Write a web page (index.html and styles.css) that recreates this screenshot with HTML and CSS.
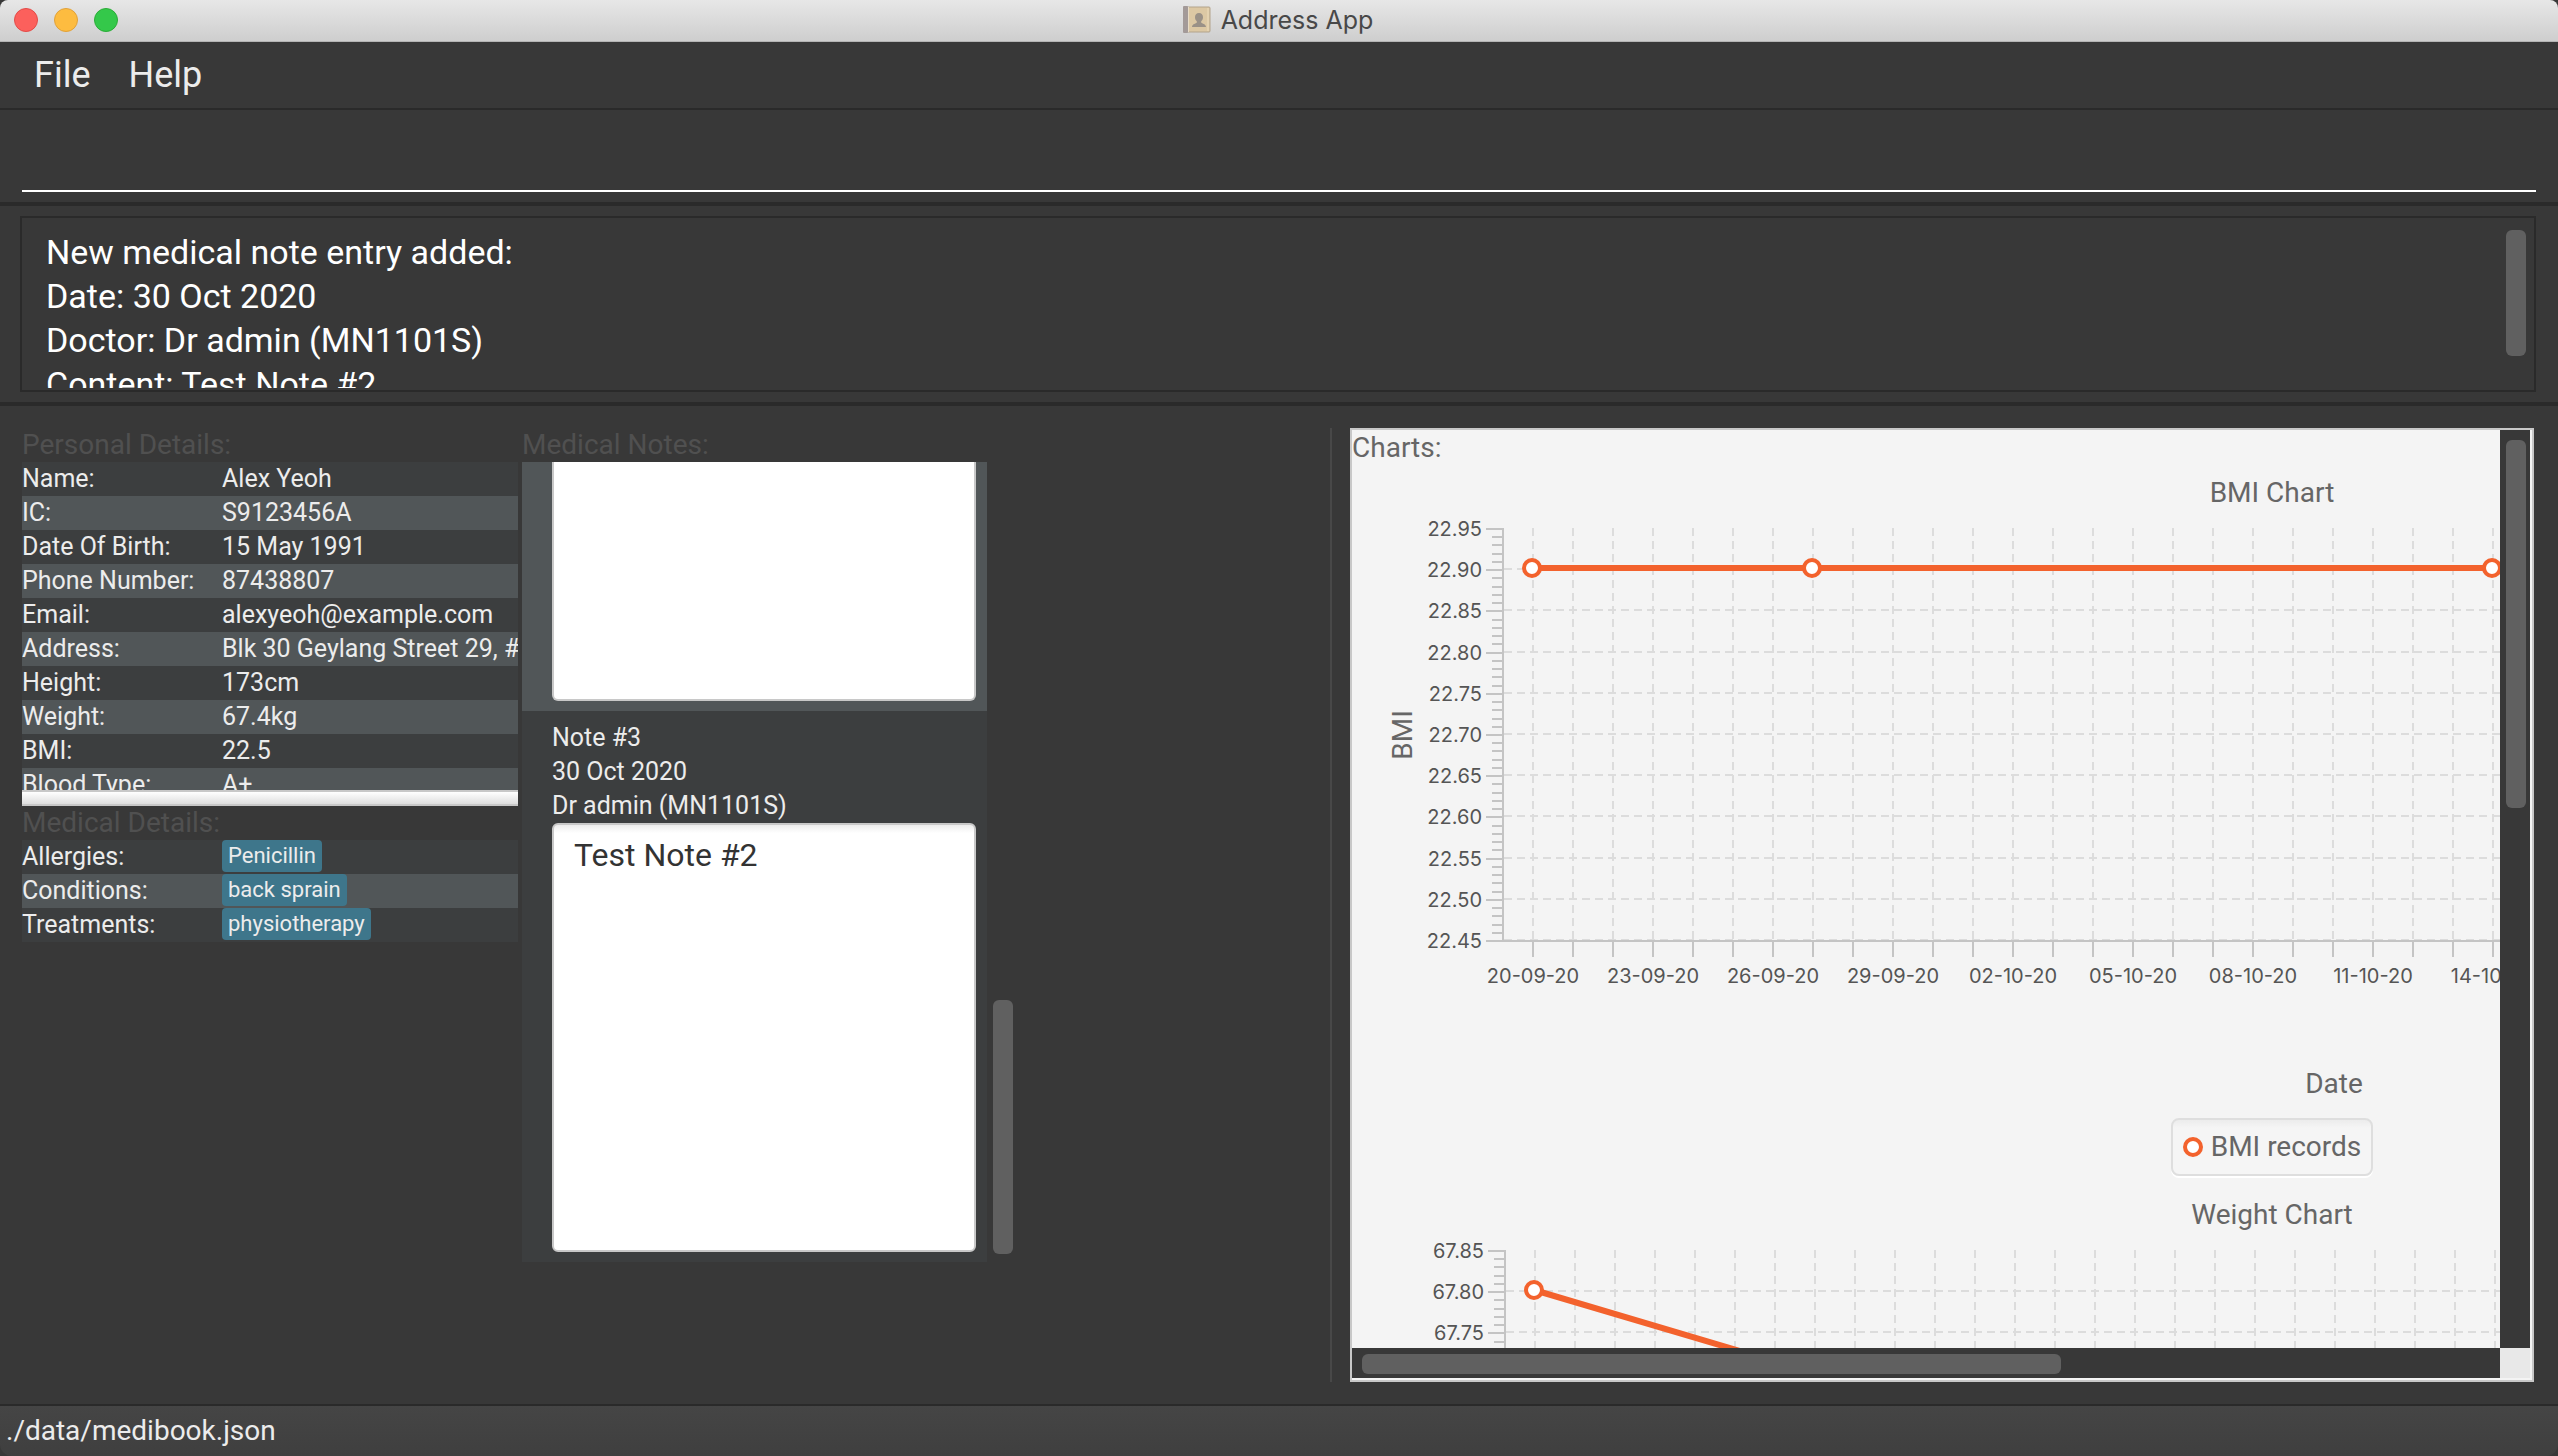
FILE: index.html
```html
<!DOCTYPE html>
<html lang="en">
<head>
<meta charset="utf-8">
<meta name="viewport" content="width=device-width, initial-scale=1">
<title>Address App</title>
<link rel="stylesheet" href="styles.css">
</head>
<body>
<div class="window">
  <header class="titlebar">
    <div class="lights">
      <button class="light light-close" type="button" aria-label="Close"></button>
      <button class="light light-min" type="button" aria-label="Minimise"></button>
      <button class="light light-zoom" type="button" aria-label="Zoom"></button>
    </div>
    <h1 class="title">
      <svg class="title-icon" viewBox="0 0 28 28" aria-hidden="true">
        <rect x="1" y="1" width="26" height="25" rx="1" fill="#dcc8a4" stroke="#b3a48c"/>
        <rect x="0" y="0" width="5" height="27" rx="1" fill="#a39a98"/>
        <path d="M5.500 1v25" stroke="#e8dcc6"/>
        <path d="M25 2v23" stroke="#ecdcbc"/>
        <path d="M16 7c2.600 0 4 1.800 4 4.200 0 1.800-.8 3.200-1.800 4v1.300c.8 1.200 4.800 1.400 4.800 4.500H9c0-3.100 4-3.300 4.800-4.500v-1.300c-1-.8-1.800-2.200-1.800-4C12 8.800 13.400 7 16 7z" fill="#9a9187"/>
      </svg>
      Address App
    </h1>
  </header>

  <nav class="menubar">
    <button class="menu" type="button">File</button>
    <button class="menu" type="button">Help</button>
  </nav>

  <div class="command">
    <input class="command-input" type="text" aria-label="Command">
  </div>

  <div class="result">
    <div class="result-box">
      <textarea class="result-text" readonly aria-label="Result">New medical note entry added:
Date: 30 Oct 2020
Doctor: Dr admin (MN1101S)
Content: Test Note #2</textarea>
      <div class="result-track"><div class="thumb result-thumb"></div></div>
    </div>
  </div>

  <main class="main">
    <div class="patient">
      <section class="details">
        <h2 class="heading">Personal Details:</h2>
        <div class="personal">
          <table class="rows">
            <tr><th scope="row">Name:</th><td>Alex Yeoh</td></tr>
            <tr><th scope="row">IC:</th><td>S9123456A</td></tr>
            <tr><th scope="row">Date Of Birth:</th><td>15 May 1991</td></tr>
            <tr><th scope="row">Phone Number:</th><td>87438807</td></tr>
            <tr><th scope="row">Email:</th><td>alexyeoh@example.com</td></tr>
            <tr><th scope="row">Address:</th><td>Blk 30 Geylang Street 29, #06-40</td></tr>
            <tr><th scope="row">Height:</th><td>173cm</td></tr>
            <tr><th scope="row">Weight:</th><td>67.4kg</td></tr>
            <tr><th scope="row">BMI:</th><td>22.5</td></tr>
            <tr><th scope="row">Blood Type:</th><td>A+</td></tr>
          </table>
        </div>
        <div class="splitter"></div>
        <h2 class="heading">Medical Details:</h2>
        <table class="rows">
          <tr><th scope="row">Allergies:</th><td><span class="tag">Penicillin</span></td></tr>
          <tr><th scope="row">Conditions:</th><td><span class="tag">back sprain</span></td></tr>
          <tr><th scope="row">Treatments:</th><td><span class="tag">physiotherapy</span></td></tr>
        </table>
      </section>

      <section class="notes">
        <h2 class="heading">Medical Notes:</h2>
        <div class="notes-scroll">
          <div class="notes-list">
            <article class="note note-alt">
              <textarea class="note-text" readonly aria-label="Note content"></textarea>
            </article>
            <article class="note">
              <p>Note #3</p>
              <p>30 Oct 2020</p>
              <p>Dr admin (MN1101S)</p>
              <textarea class="note-text" readonly aria-label="Note #3 content">Test Note #2</textarea>
            </article>
          </div>
          <div class="notes-track"><div class="thumb notes-thumb"></div></div>
        </div>
      </section>
    </div>

    <section class="charts">
      <div class="charts-view">
        <div class="charts-content">
          <h2 class="charts-label">Charts:</h2>
          <figure class="chart">
            <figcaption class="chart-title">BMI Chart</figcaption>
            <svg class="plot" id="bmi-plot" role="img" aria-label="BMI Chart"></svg>
            <p class="axis-label">Date</p>
            <div class="legend">
              <svg class="legend-dot" viewBox="0 0 20 20" aria-hidden="true"><circle cx="10" cy="10" r="8"/></svg>
              BMI records
            </div>
          </figure>
          <figure class="chart">
            <figcaption class="chart-title">Weight Chart</figcaption>
            <svg class="plot" id="weight-plot" role="img" aria-label="Weight Chart"></svg>
          </figure>
        </div>
      </div>
      <div class="track-v"><div class="thumb thumb-v"></div></div>
      <div class="track-h"><div class="thumb thumb-h"></div></div>
      <div class="corner"></div>
    </section>
  </main>

  <footer class="status">./data/medibook.json</footer>
</div>
<script src="charts.js"></script>
</body>
</html>
```
FILE: styles.css
```css
* {
  box-sizing: border-box;
}

body {
  margin: 0;
  background: #383838;
  color: #ececec;
  font: 25px/34px Roboto, "Liberation Sans", sans-serif;
}

h1, h2, p, figure {
  margin: 0;
  font-weight: 400;
}

button, input, textarea {
  margin: 0;
  padding: 0;
  border: 0;
  background: none;
  color: inherit;
  font: inherit;
  outline: 0;
}

textarea {
  display: block;
  resize: none;
  overflow: hidden;
}

.window {
  display: flex;
  flex-direction: column;
  height: 100vh;
  overflow: hidden;
  border-radius: 8px 8px 12px 12px;
}

.titlebar {
  display: grid;
  grid-template-columns: 1fr auto 1fr;
  align-items: center;
  flex: none;
  height: 42px;
  padding: 0 16px 1px 14px;
  border-bottom: 1px solid #b4b4b4;
  background: linear-gradient(#e7e7e7, #cecece);
}

.lights {
  display: flex;
  gap: 16px;
}

.light {
  width: 24px;
  height: 24px;
  border: 1px solid;
  border-radius: 50%;
}

.light-close {
  border-color: #e24b48;
  background: #fc605c;
}

.light-min {
  border-color: #e0a13a;
  background: #fdbc40;
}

.light-zoom {
  border-color: #2bac38;
  background: #34c84a;
}

.title {
  display: flex;
  align-items: center;
  gap: 10px;
  color: #484848;
  font: 25px/40px Inter, Roboto, sans-serif;
}

.title-icon {
  width: 28px;
  height: 28px;
}

.menubar {
  display: flex;
  flex: none;
  gap: 38px;
  height: 68px;
  padding: 0 34px;
  border-bottom: 2px solid #2a2a2a;
}

.menu {
  font-size: 36px;
}

.command {
  flex: none;
  height: 96px;
  padding: 0 22px 10px;
  border-bottom: 4px solid #2a2a2a;
}

.command-input {
  width: 100%;
  height: 82px;
  border-bottom: 2px solid #fff;
  font-size: 34px;
}

.result {
  flex: none;
  height: 200px;
  padding: 10px 22px 10px 20px;
  border-bottom: 4px solid #2a2a2a;
}

.result-box {
  display: flex;
  height: 176px;
  padding-bottom: 2px;
  border: 2px solid #2a2a2a;
}

.result-text {
  flex: 1;
  padding: 12px 24px 0;
  color: #fff;
  font-size: 34px;
  line-height: 44px;
}

.result-track {
  padding: 12px 8px;
}

.thumb {
  width: 20px;
  border-radius: 6px;
  background: #606060;
}

.result-thumb {
  height: 126px;
}

.main {
  display: grid;
  grid-template-columns: 1310fr 1184fr;
  gap: 18px;
  flex: 1;
  min-height: 0;
  padding: 22px 24px 22px 22px;
}

.patient {
  display: grid;
  grid-template-columns: 496fr 491fr 313fr;
  gap: 4px;
  min-width: 0;
  border-right: 2px solid #484848;
}

.details, .notes {
  min-width: 0;
}

.heading {
  color: #505050;
  font-size: 28px;
  line-height: 34px;
}

.personal {
  height: 328px;
  overflow: hidden;
}

.rows {
  width: 100%;
  table-layout: fixed;
  border-collapse: collapse;
}

.rows tr {
  height: 34px;
  background: #3c3e3f;
}

.rows tr:nth-child(even) {
  background: #515658;
}

.rows th, .rows td {
  padding: 0;
  overflow: hidden;
  font-weight: 400;
  text-align: left;
  vertical-align: top;
  white-space: nowrap;
}

.rows th {
  width: 200px;
}

.splitter {
  height: 16px;
  border: 2px solid #c8c8c8;
  border-width: 2px 0;
  background: linear-gradient(#fff, #dedede);
}

.tag {
  display: block;
  width: fit-content;
  height: 32px;
  padding: 0 6px;
  border-radius: 4px;
  background: #3e768b;
  font-size: 22px;
  line-height: 32px;
}

.notes-scroll {
  display: flex;
}

.notes-list {
  flex: 1;
}

.note {
  padding: 10px 11px 10px 30px;
  background: #3c3e3f;
}

.note-text {
  width: 100%;
  height: 429px;
  padding: 8px 20px;
  border: 2px solid #c8c8c8;
  border-radius: 6px;
  background: linear-gradient(#ececec, #fff 8px);
  color: #333;
  font-size: 32px;
  line-height: 44px;
}

.note-alt {
  padding-top: 0;
  background: #515658;
}

.note-alt .note-text {
  height: 239px;
  border-top: 0;
  border-radius: 0 0 6px 6px;
  background: #fff;
}

.notes-track {
  display: flex;
  align-items: flex-end;
  padding: 8px 0 8px 6px;
}

.notes-thumb {
  height: 254px;
}

.charts {
  display: grid;
  grid-template-columns: minmax(0, 1fr) 30px;
  grid-template-rows: minmax(0, 1fr) 30px;
  min-width: 0;
  min-height: 0;
  padding: 0 2px 2px 0;
  border: 2px solid #c8c8c8;
  background: #f4f4f4;
  color: #666;
  font-size: 28px;
}

.charts-view {
  overflow: hidden;
}

.charts-content {
  width: 1840px;
}

.charts-label {
  font-size: 28px;
  line-height: 36px;
}

.chart {
  display: flex;
  flex-direction: column;
  align-items: center;
  padding-top: 10px;
}

.plot {
  width: 100%;
  height: 490px;
}

.axis-label {
  margin-top: 67px;
  padding-left: 124px;
}

.legend {
  display: flex;
  align-items: center;
  gap: 8px;
  height: 58px;
  margin: 17px 0 12px;
  padding: 0 10px;
  border: 2px solid #dedede;
  border-radius: 8px;
  box-shadow: 0 2px 0 #fff;
  background: linear-gradient(#ececec, #f5f5f5 8px);
}

.legend-dot {
  width: 20px;
  height: 20px;
}

.legend-dot circle, .marker {
  fill: #fff;
  stroke: #f3622d;
  stroke-width: 4px;
}

.series {
  fill: none;
  stroke: #f3622d;
  stroke-width: 6px;
}

.axis {
  fill: none;
  stroke: #c4c4c4;
  stroke-width: 2px;
}

.grid {
  fill: none;
  stroke: #dcdcdc;
  stroke-width: 2px;
  stroke-dasharray: 8 5;
}

.tick-label {
  fill: #555;
  font: 20px Inter, Roboto, sans-serif;
}

.tick-x {
  text-anchor: middle;
}

.tick-y {
  text-anchor: end;
}

.y-name {
  fill: #666;
  text-anchor: middle;
}

.track-v, .track-h {
  background: #383838;
}

.track-v {
  padding: 10px 6px;
}

.thumb-v {
  height: 41%;
}

.track-h {
  padding: 6px 10px;
}

.thumb-h {
  width: 62%;
  height: 20px;
}

.corner {
  background: #e8e8e8;
}

.status {
  flex: none;
  height: 52px;
  padding-left: 6px;
  border-top: 2px solid #2a2a2a;
  background: linear-gradient(#454545, #3f3f3f);
  font-size: 28px;
  line-height: 50px;
}
```
FILE: charts.js
```js
const DAY_WIDTH = 40;
const STEP_HEIGHT = 41.2;
const TOP = 19;

function el(svg, name, attrs, text) {
  const node = document.createElementNS("http://www.w3.org/2000/svg", name);
  for (const key in attrs) node.setAttribute(key, attrs[key]);
  if (text) node.textContent = text;
  svg.appendChild(node);
}

function dayLabel(offset) {
  const d = new Date(Date.UTC(2020, 8, 20 + offset));
  const pad = n => String(n).padStart(2, "0");
  return pad(d.getUTCDate()) + "-" + pad(d.getUTCMonth() + 1) + "-20";
}

function drawChart(id, opts) {
  const svg = document.getElementById(id);
  const { axisX, max, name, points } = opts;
  const steps = 10;
  const yAt = step => Math.round(TOP + step * STEP_HEIGHT);
  const bottom = yAt(steps);
  const right = 1810;
  const days = Math.floor((right - axisX - 30) / DAY_WIDTH);
  const xAt = day => axisX + 30 + day * DAY_WIDTH;

  let grid = "";
  for (let day = 0; day <= days; day++) grid += `M${xAt(day)} ${TOP - 1}V${bottom}`;
  for (let i = 1; i <= steps; i++) grid += `M${axisX + 1} ${yAt(i) - 1}H${right}`;
  el(svg, "path", { class: "grid", d: grid });

  let axis = `M${axisX} ${TOP - 1}V${bottom}H${right}`;
  for (let i = 0; i <= steps * 5; i++) {
    axis += `M${axisX - (i % 5 ? 11 : 17)} ${yAt(i / 5)}H${axisX}`;
  }
  for (let day = 0; day <= days; day++) axis += `M${xAt(day)} ${bottom}v16`;
  el(svg, "path", { class: "axis", d: axis });

  for (let i = 0; i <= steps; i++) {
    el(svg, "text", { class: "tick-label tick-y", x: axisX - 21, y: yAt(i) + 7 }, (max - i * 0.05).toFixed(2));
  }
  for (let day = 0; day <= days; day += 3) {
    el(svg, "text", { class: "tick-label tick-x", x: xAt(day), y: bottom + 42 }, dayLabel(day));
  }
  if (name) {
    const mid = (TOP + bottom) / 2;
    el(svg, "text", { class: "y-name", transform: `translate(60 ${mid}) rotate(-90)` }, name);
  }

  const at = p => [xAt(p[0]) - 1, yAt((max - p[1]) / 0.05) - 2];
  el(svg, "polyline", { class: "series", points: points.map(at).join(" ") });
  for (const p of points) {
    const [cx, cy] = at(p);
    el(svg, "circle", { class: "marker", cx, cy, r: 8 });
  }
}

drawChart("bmi-plot", { axisX: 151, max: 22.95, name: "BMI", points: [[0, 22.9], [7, 22.9], [24, 22.9]] });
drawChart("weight-plot", { axisX: 153, max: 67.85, points: [[0, 67.8], [7, 67.7], [24, 67.4]] });
```
